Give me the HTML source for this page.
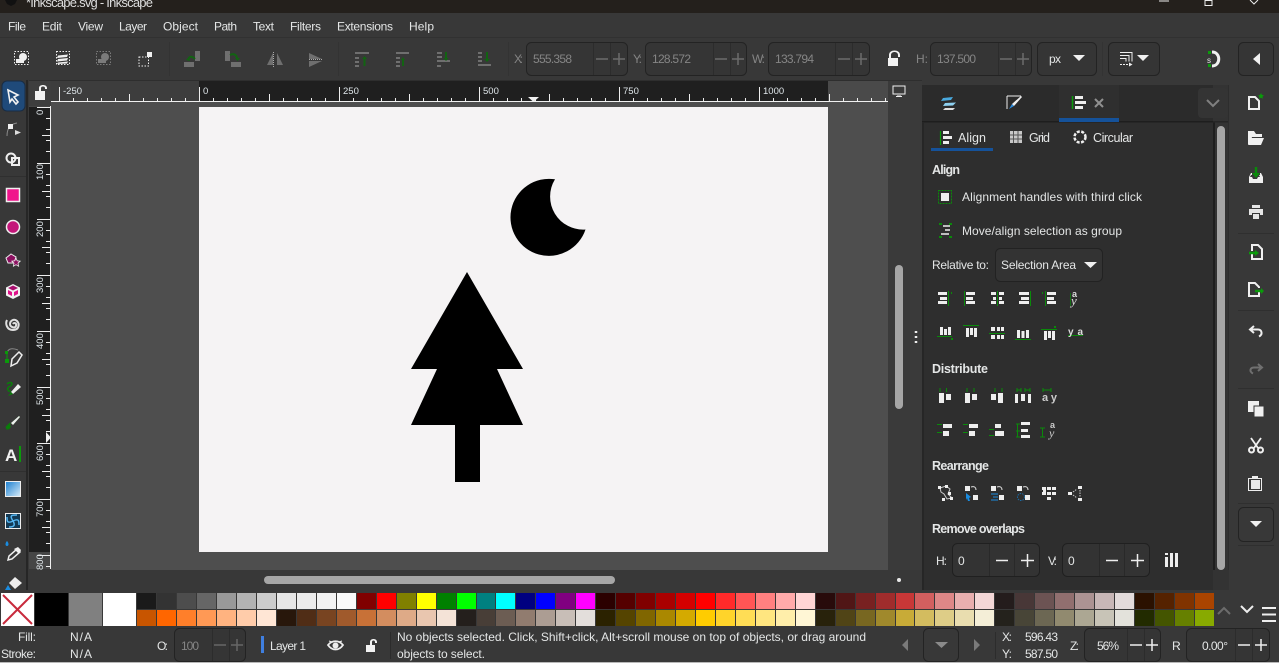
<!DOCTYPE html>
<html><head><meta charset="utf-8"><title>Inkscape</title>
<style>
html,body{margin:0;padding:0;width:1279px;height:663px;overflow:hidden;background:#383838}
svg{position:absolute;left:0;top:0;display:block}
text{font-family:"Liberation Sans",sans-serif;font-size:12px;fill:#e4e6e6}
.d{fill:#858585}.b{font-weight:bold;font-size:12.5px}.s{font-size:9.5px;fill:#dfe6ea}
.sw{position:absolute;display:flex;left:137.3px;width:1080px;height:17px}
.sw i{display:block;width:18.957px;height:16px;margin-right:1px;border:0;flex:none}
</style></head><body>
<svg width="1279" height="663" viewBox="0 0 1279 663" xmlns="http://www.w3.org/2000/svg">
<defs>
<pattern id="hr" x="59" y="81" width="140" height="21" patternUnits="userSpaceOnUse">
<path d="M.5 6V21M14.5 17V21M28.5 17V21M42.5 17V21M56.5 17V21M70.5 13V21M84.5 17V21M98.5 17V21M112.5 17V21M126.5 17V21" stroke="#eee" fill="none"/></pattern>
<pattern id="vr" x="29" y="107" width="22" height="56" patternUnits="userSpaceOnUse">
<path d="M8 .5H22M17 11.5H22M17 22.5H22M13 28.5H22M17 33.5H22M17 44.5H22" stroke="#eee" fill="none"/></pattern>
</defs>
<!-- backgrounds -->
<rect width="1279" height="663" fill="#383838"/>
<rect width="1279" height="13" fill="#24201c"/>
<rect y="37" width="1279" height="1" fill="#313131"/>
<rect y="80" width="922" height="1" fill="#2e2e2e"/>
<!-- title -->
<path d="M5 0h12l-2 4-4 2-4-2z" fill="#111"/>
<text x="26" y="7" textLength="127" style="font-size:13px;fill:#ddd">*Inkscape.svg - Inkscape</text>
<path d="M1159 1h10" stroke="#eee"/><path d="M1205 .5h7v5h-7zM1207 .5v-1" fill="none" stroke="#eee"/><path d="M1250 0l4 4 4-4" fill="none" stroke="#eee"/>
<!-- menu -->
<g style="font-size:12.5px">
<text x="8" y="30.500" textLength="18">File</text><text x="42" y="30.500" textLength="20">Edit</text><text x="78" y="30.500" textLength="25">View</text><text x="119" y="30.500" textLength="28">Layer</text><text x="163" y="30.500" textLength="35">Object</text><text x="214" y="30.500" textLength="23">Path</text><text x="253" y="30.500" textLength="21">Text</text><text x="290" y="30.500" textLength="31">Filters</text><text x="337" y="30.500" textLength="56">Extensions</text><text x="409" y="30.500" textLength="25">Help</text>
</g>
<!-- top toolbar separators -->
<path d="M169.500 42V76M338.500 42V76M508.500 42V76M1102.500 42V76" stroke="#333"/>
<!-- top toolbar icons -->
<g fill="none" stroke="#f0f0f0" stroke-dasharray="1.500 1.500"><rect x="14.500" y="51.500" width="14" height="13"/><rect x="56.500" y="51.500" width="13" height="13"/><rect x="139" y="57" width="9.500" height="9"/></g>
<g fill="#f0f0f0"><circle cx="23" cy="57" r="4"/><rect x="16" y="59" width="8" height="4"/><path d="M58 55.500l10-1-1 2.500-10 1zM58 59l10-1-1 2.500-10 1zM58 62.500l10-1-1 2-10 .5z"/><rect x="147" y="52" width="5" height="5"/></g>
<g opacity=".45"><rect x="96.500" y="51.500" width="14" height="13" fill="none" stroke="#ccc" stroke-dasharray="1.500 1.500"/><circle cx="105" cy="57" r="4" fill="#ccc"/><rect x="98" y="59" width="8" height="4" fill="#ccc"/></g>
<g fill="#6f6f6f"><rect x="184" y="62" width="10" height="5"/><rect x="195" y="51" width="5" height="10"/><rect x="225" y="51" width="5" height="10"/><rect x="231" y="62" width="10" height="5"/><path d="M267 65l6-12v12zM283 65l-6-12v12zM309 53l13 6h-13zM309 67l13-6h-13z"/>
<path d="M355 52h14v2h-14zM355 57h4v2h-4zM355 61h4v2h-4zM355 65h4v2h-4zM396 52h13v2h-13zM396 57h4v2h-4zM396 61h4v2h-4zM396 65h4v2h-4zM437 52h5v2h-5zM437 56h5v2h-5zM437 60h13v2h-13zM437 65h4v2h-4zM478 52h4v2h-4zM478 56h4v2h-4zM478 60h4v2h-4zM478 64h13v2h-13z"/></g>
<g fill="none" stroke="#126312" stroke-width="2"><path d="M195 59c-4-4-6-2-7 1M230 55c4-2 7 0 7 4M364.500 66V58M403 66V59M446 52v8M487 52v9"/></g>
<path d="M186 60l3-3 1 4zM235 58h5l-2.500 3zM362 59l2.500-3 2.500 3zM401 60l2-3 2 3zM443.500 58h5l-2.500 3zM484 59h6l-3 3z" fill="#126312"/>
<path d="M273.500 52v15M309 59.500h14" stroke="#aaa" stroke-dasharray="1 1"/>
<!-- field boxes -->
<g fill="#353535" stroke="#232323"><rect x="526.500" y="42.500" width="101" height="33" rx="5"/><rect x="645.500" y="42.500" width="101" height="33" rx="5"/><rect x="768.500" y="42.500" width="101" height="33" rx="5"/><rect x="930.500" y="42.500" width="101" height="33" rx="5"/><rect x="1037.500" y="42.500" width="59" height="33" rx="5"/><rect x="1108.500" y="42.500" width="51" height="33" rx="5"/><rect x="1238.500" y="42.500" width="35" height="33" rx="5"/></g>
<path d="M593.500 43V75M610.500 43V75M713.500 43V75M730.500 43V75M835.500 43V75M852.500 43V75M998.500 43V75M1015.500 43V75" stroke="#2c2c2c"/>
<path d="M596 59h12M613 59h12M715 59h12M732 59h12M838 59h12M855 59h12M1000 59h12M1017 59h12M619 53v12M738 53v12M861 53v12M1023 53v12" stroke="#6c6c6c" stroke-width="1.500"/>
<g style="font-size:12px"><text class="d" x="514" y="63" textLength="9">X:</text><text class="d" x="533" y="63" textLength="39">555.358</text><text class="d" x="633" y="63" textLength="9">Y:</text><text class="d" x="652" y="63" textLength="39">128.572</text><text class="d" x="752" y="63" textLength="13">W:</text><text class="d" x="775" y="63" textLength="39">133.794</text><text class="d" x="916" y="63" textLength="12">H:</text><text class="d" x="937" y="63" textLength="39">137.500</text><text x="1049" y="63" textLength="12">px</text></g>
<path d="M888 58h10v8h-10zM891 58v-3c0-4 7-4 7 0v2h2v-2c0-6-11-6-11 0v3z" fill="#f2f2f2"/>
<path d="M1073 55h12l-6 6zM1137 55h12l-6 6zM1253 59l7-6v12z" fill="#f0f0f0"/>
<path d="M1120 52.500h12v9M1120 55.500h9v6M1120 58.500h6v3" stroke="#f0f0f0" fill="none"/><path d="M1120 64.500h9" stroke="#f0f0f0" fill="none" stroke-dasharray="2 1"/><path d="M1129 62.500l3.500 2-3.500 2z" fill="#f0f0f0"/>
<path d="M1212 52c9 0 9 14 0 14" fill="none" stroke="#f0f0f0" stroke-width="3"/><rect x="1208" y="51" width="3" height="3" fill="#0b9b0b"/><rect x="1208" y="64" width="3" height="3" fill="#0b9b0b"/><text x="1207" y="63" style="font-size:8px">s</text>
<!-- rulers -->
<rect x="29" y="81" width="893" height="23" fill="#3e3e3e"/>
<rect x="199" y="81" width="629" height="20" fill="#1f1f1f"/>
<rect x="51" y="81" width="148" height="20" fill="#3d3d3d"/>
<rect x="828" y="81" width="60" height="20" fill="#4a4a4a"/>
<rect x="0" y="80" width="29" height="510" fill="#383838"/>
<rect x="26" y="80" width="2" height="510" fill="#262626"/>
<rect x="29" y="103" width="22" height="466" fill="#464646"/>
<rect x="29" y="107" width="21" height="445" fill="#1f1f1f"/>
<rect x="51" y="102" width="837" height="468" fill="#4e4e4e"/>
<rect x="199" y="107" width="629" height="445" fill="#f5f3f4"/>
<rect x="51" y="81" width="837" height="21" fill="url(#hr)"/>
<rect x="51" y="101" width="837" height="1" fill="#f0f0f0"/>
<rect x="29" y="107" width="22" height="461" fill="url(#vr)"/>
<rect x="50" y="102" width="1" height="467" fill="#f0f0f0"/>
<rect x="29" y="81" width="22" height="25" fill="#3e3e3e"/>
<path d="M35 91h10v9h-10zM39 91v-3c0-4 8-4 8 0v1h-2v-1c0-2-4-2-4 0v3z" fill="#f2f2f2"/>
<path d="M528 97h11l-5.500 5z" fill="#f0f0f0"/><path d="M46 432v11l5-5.500z" fill="#f0f0f0"/>
<g class="rl"><text class="s" x="63" y="94">-250</text><text class="s" x="203" y="94">0</text><text class="s" x="343" y="94">250</text><text class="s" x="483" y="94">500</text><text class="s" x="623" y="94">750</text><text class="s" x="763" y="94">1000</text>
<text class="s" transform="translate(43 115) rotate(-90)">0</text><text class="s" transform="translate(43 180) rotate(-90)">100</text><text class="s" transform="translate(43 237) rotate(-90)">200</text><text class="s" transform="translate(43 293) rotate(-90)">300</text><text class="s" transform="translate(43 349) rotate(-90)">400</text><text class="s" transform="translate(43 405) rotate(-90)">500</text><text class="s" transform="translate(43 461) rotate(-90)">600</text><text class="s" transform="translate(43 517) rotate(-90)">700</text><text class="s" transform="translate(43 570) rotate(-90)">800</text></g>
<!-- drawing -->
<path d="M467 272L523 369H497L523 425H480V482H455V425H411L437 369H411Z" fill="#000"/>
<path d="M555 179.300A38.500 38.500 0 1 0 585.500 229.500A33 33 0 0 1 555 179.300Z" fill="#000"/>
<!-- left toolbar -->
<rect x="2" y="81" width="23" height="30" rx="5" fill="#1f4a7a" stroke="#182c44"/>
<path d="M8 90l10 5-4 2 4 5-2 2-4-5-2 3z" fill="#1f4a7a" stroke="#f2f2f2" stroke-width="1.600"/>
<path d="M7 136c0-7 3-12 10-13" fill="none" stroke="#888"/><rect x="8" y="124" width="5" height="5" fill="#f0f0f0"/><path d="M15 130l6 2.500-6 2.500z" fill="#ddd"/>
<circle cx="11" cy="158" r="4.500" fill="none" stroke="#eee" stroke-width="2"/><rect x="12" y="158" width="7" height="7" fill="none" stroke="#eee" stroke-width="2"/>
<rect x="6.500" y="188.500" width="13" height="13" fill="#f0148c" stroke="#f0f0f0" stroke-width="1.500"/>
<circle cx="13" cy="227" r="6.500" fill="#c4177a" stroke="#f0f0f0" stroke-width="1.500"/>
<path d="M6 258l5-4 5 3-2 6h-6z" fill="#8c1060" stroke="#eee"/><path d="M16 258l1.200 2.800 3 .4-2.200 2 .6 3-2.600-1.500-2.600 1.500 .6-3-2.200-2 3-.4z" fill="#8c1060" stroke="#eee" stroke-width=".8"/>
<path d="M13 284l7 3.500v8L13 299l-7-3.500v-8z" fill="#f2f2f2"/><path d="M8 288l5-2.500 5 2.500-5 2.500z" fill="#aa1070"/><path d="M8 290l4 2v4l-4-2zM18 290l-4 2v4l4-2z" fill="#e0128a"/>
<path d="M13 324c1-2 4-1 3 2s-6 1-6-2 4-6 7-3 2 9-4 9-8-6-6-10" fill="none" stroke="#e0e0e0" stroke-width="2"/>
<path d="M7 353c1-5 6-5 11-3" fill="none" stroke="#888"/><rect x="5" y="351" width="3" height="3" fill="#0a9a0a"/><rect x="5" y="359" width="4" height="4" fill="#0a9a0a"/><path d="M7 353v6" stroke="#0a9a0a"/><path d="M11 366l1-7 7-7 3 3-5 8z" fill="none" stroke="#eee" stroke-width="1.500"/>
<path d="M7 384c2-2 5-2 5 0s-6 3-4 6c1 2 3 1 3 1" fill="none" stroke="#0a7d0a" stroke-width="1.500"/><path d="M11 392l7-8 3 3-8 7z" fill="#eee"/><path d="M8 396l3-4 2 2z" fill="#0a7d0a"/>
<path d="M6 428c1-3 3-2 4-5" fill="none" stroke="#0a7d0a" stroke-width="1.500"/><path d="M6 429c1 1 4 1 5-3l-3-2zM11 423l8-7 1 1-7 8z" fill="#0a7d0a"/><path d="M11 423l8-7 1 1-7 8z" fill="#eee"/>
<text x="5" y="461" textLength="13" style="font-size:17px;font-weight:bold;fill:#f2f2f2">A</text><rect x="19" y="446" width="2" height="16" fill="#0a9a0a"/>
<defs><linearGradient id="g1" x1="0" y1="0" x2="1" y2="1"><stop offset="0" stop-color="#1a7fd0"/><stop offset="1" stop-color="#d8ecf8"/></linearGradient></defs>
<rect x="5.500" y="481.500" width="15" height="15" fill="url(#g1)" stroke="#eee"/>
<rect x="5.500" y="513.500" width="15" height="15" fill="#123a55" stroke="#eee"/><path d="M13 521c-4-6-1-6 4-6M13 521c6-3 6 0 6 4M13 521c3 5 0 6-4 6M13 521c-6 3-6 0-6-4" fill="none" stroke="#54b4f0" stroke-width="1.500"/>
<path d="M7 541c-2 2-2 5 0 5s2-3 0-5z" fill="#1a8ce0"/><path d="M8 560l1-4 8-7 3 3-8 7z" fill="none" stroke="#eee" stroke-width="1.500"/><path d="M14 549l4-2 3 3-2 4z" fill="#eee"/>
<path d="M15 577l7 6-7 6-6-6z" fill="#eee"/><path d="M8 585l3 5H5z" fill="#1a8ce0"/>
<path d="M0 176.500h26M0 471.500h26" stroke="#2f2f2f"/>
<!-- middle bars -->
<rect x="888" y="81" width="34" height="509" fill="#3a3a3a"/>
<rect x="51" y="570" width="871" height="20" fill="#383838"/>
<rect x="264" y="576" width="351" height="8" rx="4" fill="#a6a6a6"/>
<rect x="895" y="265" width="8" height="144" rx="4" fill="#a6a6a6"/>
<circle cx="899" cy="580" r="2" fill="#e8e8e8"/>
<path d="M893 86h12v8h-12zM897 96h4M896 96.500h6" fill="none" stroke="#f0f0f0"/>
<path d="M916 331v2M916 336v2M916 341v2" stroke="#eee" stroke-width="2.500"/>
<!-- panel -->
<rect x="922" y="85" width="307" height="505" fill="#2e2e2e"/>
<rect x="922" y="85" width="291" height="37" fill="#2b2b2b"/>
<rect x="1059" y="85" width="60" height="33" fill="#2f2f2f"/>
<rect x="922" y="121" width="291" height="1.500" fill="#1e1e1e"/>
<rect x="1059" y="118" width="60" height="4" fill="#15529a"/>
<rect x="1213" y="85" width="16" height="505" fill="#333"/><rect x="1213" y="122" width="2" height="448" fill="#1e1e1e"/>
<rect x="1198" y="88" width="30" height="30" rx="4" fill="#343434"/>
<path d="M1207 100l6 6 6-6" fill="none" stroke="#808080" stroke-width="2"/>
<rect x="1213" y="121" width="16" height="1.500" fill="#262626"/>
<rect x="1217" y="126" width="8" height="444" rx="4" fill="#a6a6a6"/>
<rect x="1228" y="85" width="1" height="485" fill="#2d2d2d"/>
<rect x="922" y="122" width="2" height="468" fill="#262626"/>
<rect x="931" y="148" width="62" height="3" fill="#15529a"/>
<path d="M943 98l10-1-2 3-10 1z" fill="#49a9de"/><path d="M945 103l11-.5-3 3-10 .5z" fill="#8ed0f0"/><path d="M945 108h10l-2 2h-10z" fill="#ddd"/>
<path d="M1007 96h14M1007 96v13" stroke="#eee" fill="none"/><path d="M1009 109l3-5 2 2z" fill="#2a8ce0"/><path d="M1012 104l9-8 1 1-8 9z" fill="#eee"/>
<path d="M1072.500 96v13" stroke="#0a9a0a" stroke-width="1.500"/><path d="M1075 96h8v3h-8zM1075 101h11v3h-11zM1075 106h8v3h-8z" fill="#eee"/>
<path d="M1095 99l8 8M1103 99l-8 8" stroke="#909090" stroke-width="2"/>
<path d="M940.500 131v14" stroke="#0a9a0a" stroke-width="1.200"/><path d="M943 131h6v3h-6zM943 136h9v3h-9zM943 141h6v3h-6z" fill="#eee"/>
<text x="958" y="142" textLength="28" style="font-size:12.500px">Align</text>
<path d="M1010 131h12v12h-12z" fill="#c8c8c8"/><path d="M1013.500 131v12M1018 131v12M1010 135h12M1010 139h12" stroke="#555"/>
<text x="1029" y="142" textLength="21" style="font-size:12.500px">Grid</text>
<circle cx="1080" cy="137" r="5.500" fill="none" stroke="#eee" stroke-width="2.500" stroke-dasharray="3 1.500"/>
<text x="1093" y="142" textLength="40" style="font-size:12.500px">Circular</text>
<text class="b" x="932" y="174" textLength="28">Align</text>
<rect x="938.500" y="190.500" width="13" height="13" fill="none" stroke="#0a8a0a" stroke-dasharray="2 1"/><rect x="941" y="193" width="8" height="8" fill="#eee"/>
<text x="962" y="201" textLength="180">Alignment handles with third click</text>
<path d="M939 224h3M949 224h3M939 237h3M949 237h3" stroke="#0a8a0a" stroke-width="2"/><path d="M943 226h7M945 230h5M941 234h8" stroke="#eee" stroke-width="1.500"/>
<text x="962" y="235" textLength="160">Move/align selection as group</text>
<text x="932" y="269" textLength="57">Relative to:</text>
<rect x="995.500" y="248.500" width="107" height="33" rx="5" fill="#333" stroke="#222"/>
<text x="1001" y="269" textLength="75">Selection Area</text>
<path d="M1084 262h13l-6.500 6z" fill="#f0f0f0"/>
<!-- align row1 -->
<g fill="#eee"><path d="M938 292h9v3h-9zM940 297h7v3h-7zM938 301h9v3h-9zM966 292h9v3h-9zM966 297h7v3h-7zM966 301h9v3h-9zM991 292h5v3h-5zM999 292h5v3h-5zM993 297h3v3h-3zM999 297h3v3h-3zM991 301h5v3h-5zM999 301h5v3h-5zM1019 292h10v3h-10zM1021 297h8v3h-8zM1019 301h10v3h-10zM1047 292h9v3h-9zM1047 297h7v3h-7zM1047 301h9v3h-9z"/></g>
<path d="M948.500 291v15M964.500 291v15M997.500 291v15M1030.500 291v15M1045.500 291v15" stroke="#0a8a0a"/><path d="M951 292h1v2h-1zM1042 292h1v2h-1z" fill="#0a8a0a"/>
<text x="1072" y="297" style="font-size:9px;font-weight:bold;fill:#ddd">a</text><text x="1071" y="305" style="font-size:13px;font-family:'Liberation Serif',serif;font-style:italic;fill:#ddd">y</text><path d="M1070.500 293v13" stroke="#0a8a0a" opacity=".7"/>
<!-- align row2 -->
<g fill="#eee"><path d="M940 327h3v8h-3zM944 329h3v6h-3zM948 327h3v8h-3zM966 328h3v9h-3zM970 328h3v7h-3zM974 328h3v9h-3zM991 327h4v4h-4zM997 327h3v4h-3zM1001 327h3v4h-3zM991 335h4v4h-4zM997 335h3v4h-3zM1001 335h3v4h-3zM1017 330h3v8h-3zM1021.500 331h3v7h-3zM1026 330h3v8h-3zM1044 331h3v9h-3zM1048 331h3v7h-3zM1052 331h3v9h-3z"/></g>
<path d="M937 336.500h15M963 325.500h16M989 333.500h16M1015 339.500h16M1041 329.500h16M1068 335.500h15" stroke="#0a8a0a"/><path d="M951 338h2v2h-2zM1054 326h2v2h-2z" fill="#0a8a0a"/>
<text x="1068" y="335" textLength="15" style="font-size:10px;fill:#ddd;font-weight:bold">ya</text>
<text class="b" x="932" y="373" textLength="56">Distribute</text>
<!-- dist row1 -->
<g fill="#eee"><path d="M939 393h5v10h-5zM946 394h5v6h-5zM965 393h5v10h-5zM972 394h5v6h-5zM991 394h5v6h-5zM998 393h5v10h-5zM1015 394h3v9h-3zM1021 394h4v7h-4zM1028 394h3v9h-3z"/></g>
<path d="M940 388v4M946.500 388v4M967 388v4M974 388v4M995 388v4M1002 388v4M1017 390h4M1025 390h5M1017 388v4M1021 388v4M1025 388v4M1030 388v4M1043 390h8M1043 388v4M1051 388v4" stroke="#0a8a0a"/>
<text x="1042" y="401" textLength="15" style="font-size:11px;font-weight:bold;fill:#ccc">ay</text>
<!-- dist row2 -->
<g fill="#eee"><path d="M943 424h9v4h-9zM943 431h6v5h-6zM969 424h9v4h-9zM969 431h6v5h-6zM995 424h6v4h-6zM995 431h9v5h-9zM1021 422h9v3h-9zM1021 429h7v3h-7zM1021 435h9v3h-9z"/></g>
<path d="M937 424.500h5M937 432.500h5M963 424.500h5M963 432.500h5M989 429.500h5M989 435.500h5M1016 424h4M1016 431h4M1016 437h4M1017.500 424v13M1040 428h5M1040 437h5M1042.500 428v9" stroke="#0a8a0a"/>
<text x="1050" y="428" style="font-size:9px;font-weight:bold;fill:#ccc">a</text><text x="1049" y="437" style="font-size:12px;font-family:'Liberation Serif',serif;font-style:italic;fill:#ccc">y</text>
<text class="b" x="932" y="470" textLength="57">Rearrange</text>
<!-- rearrange -->
<path d="M940 488l6-2 4 3-2 5 4 4-5 1-3-5-3-2z" fill="none" stroke="#ccc"/><g fill="#eee"><rect x="938" y="486" width="3" height="3"/><rect x="945" y="485" width="3" height="3"/><rect x="948" y="492" width="3" height="3"/><rect x="950" y="497" width="3" height="3"/><rect x="942" y="498" width="3" height="3"/></g>
<g fill="#eee"><rect x="965" y="486" width="5" height="5"/><rect x="973" y="495" width="5" height="5"/><rect x="991" y="486" width="5" height="5"/><rect x="999" y="495" width="5" height="5"/><rect x="1017" y="486" width="5" height="5"/><rect x="1025" y="495" width="5" height="5"/></g>
<path d="M971 487c3-1 5 0 5 3M997 487c3-1 5 0 5 3M1023 487c3-1 5 0 5 3" fill="none" stroke="#ddd"/>
<path d="M966 493l5 4-2 1 1 3-2 0-1-3-1 2z" fill="#1a8ce0"/><path d="M991 494h7M993 497h5M991 500h7" stroke="#1a8ce0"/><circle cx="1021" cy="497" r="3.500" fill="none" stroke="#1a6ca8" stroke-dasharray="1.500 1"/>
<g fill="#eee"><path d="M1042 487h4v3h-4zM1047 487h4v3h-4zM1052 487h4v3h-4zM1042 492h4v3h-4zM1047 492h4v3h-4zM1052 492h4v3h-4zM1047 497h4v3h-4zM1043 490h3v2h-3z"/><path d="M1068 492h4v3h-4zM1078 486h4v3h-4zM1078 498h4v3h-4z"/></g>
<path d="M1073 492l4-3M1073 495l4 3M1080 490v7" stroke="#ccc" stroke-dasharray="1.500 1" fill="none"/>
<text class="b" x="932" y="533" textLength="93">Remove overlaps</text>
<text x="936" y="565" textLength="11">H:</text><text x="1048" y="565" textLength="9">V:</text>
<g fill="#333" stroke="#202020"><rect x="952.500" y="543.500" width="87" height="33" rx="5"/><rect x="1062.500" y="543.500" width="87" height="33" rx="5"/></g>
<path d="M989.500 544v32M1014.500 544v32M1099.500 544v32M1124.500 544v32" stroke="#292929"/>
<text x="958" y="565" textLength="7">0</text><text x="1068" y="565" textLength="7">0</text>
<path d="M996 560.500h12M1021 560.500h13M1027.500 554v13M1106 560.500h12M1131 560.500h13M1137.500 554v13" stroke="#eee" stroke-width="1.500"/>
<path d="M1165 557h3v10h-3zM1165 553h3v2h-3zM1170 553h3v14h-3zM1175 553h3v14h-3z" fill="#eee"/>
<!-- right toolbar -->
<path d="M1238 233.500h36M1238 310.500h36M1238 388.500h36M1238 503.500h36M1238 545.500h36" stroke="#2f2f2f"/>
<path d="M1249 97h6l4 4v8h-10z" fill="none" stroke="#f0f0f0" stroke-width="2"/><path d="M1261 93l1 2 2 .3-1.500 1.500 .4 2-1.900-1-1.900 1 .4-2-1.500-1.500 2-.3z" fill="#0a9a0a"/>
<path d="M1248 131h6l2 3h6v3h-10l-2 7h-2zM1251 138h13l-3 7h-13z" fill="#f0f0f0"/>
<path d="M1256 167v9" stroke="#0a8a0a" stroke-width="2.500"/><path d="M1252 173h8l-4 5z" fill="#0a8a0a"/><path d="M1252 173h-1l-2 4v6h14v-6l-2-4h-1v2h-1l1 2h-2l-1 2h-4l-1-2h-2l1-2h1z" fill="#f0f0f0"/>
<path d="M1252 205h8v3h-8zM1249 209h14v6h-3v-2h-8v2h-3zM1253 214h6v5h-6z" fill="#e6e6e6"/>
<path d="M1252 251v-6h6l4 4v10h-10v-5" fill="none" stroke="#f0f0f0" stroke-width="2"/><path d="M1249 253h8" stroke="#0a9a0a" stroke-width="2.500"/><path d="M1255 250l4 3-4 3z" fill="#0a9a0a"/>
<path d="M1259 291v5h-10v-13h6l4 4v1" fill="none" stroke="#f0f0f0" stroke-width="2"/><path d="M1255 291h8" stroke="#0a9a0a" stroke-width="2.500"/><path d="M1261 288l3 3-3 3z" fill="#0a9a0a"/>
<path d="M1254 326l-4 3.500 4 3.500M1250 329.500h8c4 0 5 5 1 7" fill="none" stroke="#eee" stroke-width="2"/>
<path d="M1258 364l4 3.500-4 3.500M1262 367.500h-8c-4 0-5 4-1 6" fill="none" stroke="#707070" stroke-width="2"/>
<path d="M1248 401h11v5h-5v6h-6z" fill="#f0f0f0"/><rect x="1254" y="406" width="10" height="11" fill="#f0f0f0" stroke="#383838" stroke-width="1"/>
<circle cx="1251.500" cy="450" r="2.500" fill="none" stroke="#f0f0f0" stroke-width="2"/><circle cx="1260.500" cy="450" r="2.500" fill="none" stroke="#f0f0f0" stroke-width="2"/><path d="M1251 438l7 10M1261 438l-7 10" stroke="#f0f0f0" stroke-width="1.800"/>
<path d="M1248.500 478.500h13v12h-13z" fill="none" stroke="#eee"/><path d="M1252 476h6v3h-6z" fill="#eee"/><path d="M1251 480h9v9h-9z" fill="#e8e8e8"/>
<rect x="1238.500" y="507.500" width="35" height="34" rx="5" fill="#383838" stroke="#232323"/><path d="M1250 521h12l-6 6z" fill="#f0f0f0"/>
<!-- palette bg -->
<rect y="590" width="1279" height="37" fill="#383838"/>
<rect x="1" y="593" width="33" height="33" fill="#fff"/><path d="M3 595l29 29M32 595l-29 29" stroke="#c82a3c" stroke-width="2"/>
<rect x="35" y="593" width="33" height="33" fill="#000"/><rect x="69" y="593" width="33" height="33" fill="#808080"/><rect x="103" y="593" width="33" height="33" fill="#fff"/>
<path d="M1218 614l6-6 6 6" fill="none" stroke="#6c6c6c" stroke-width="2"/><path d="M1241 606l6 6 6-6" fill="none" stroke="#eee" stroke-width="2"/>
<path d="M1262 608h14M1262 614.500h14M1262 621h14" stroke="#eee" stroke-width="2"/>
<!-- status -->
<text x="18" y="641" textLength="18">Fill:</text><text x="1" y="658" textLength="35">Stroke:</text><text x="70" y="641" textLength="22">N/A</text><text x="70" y="658" textLength="22">N/A</text>
<text x="157" y="650" textLength="11">O:</text>
<rect x="174.500" y="628.500" width="71" height="33" rx="5" fill="#353535" stroke="#232323"/><text class="d" x="181" y="650" textLength="18">100</text>
<path d="M212.500 629v32M229.500 629v32" stroke="#2c2c2c"/><path d="M214 645h12M231 645h12M237 639v12" stroke="#666" stroke-width="1.500"/>
<rect x="261" y="636" width="3" height="17" fill="#3f7fe0"/><text x="270" y="650" textLength="36">Layer 1</text>
<path d="M328 645c4-5 11-5 15 0-4 6-11 6-15 0z" fill="none" stroke="#eee" stroke-width="1.800"/><circle cx="335.500" cy="645.500" r="3" fill="#eee"/><path d="M329 641l3 1M342 641l-3 1" stroke="#eee"/>
<path d="M366 645h9v7h-9zM370 645v-3c0-4 7-4 7 0v1h-2v-1c0-2-3-2-3 0v3z" fill="#f2f2f2"/>
<path d="M390.500 632v27M995.500 632v27" stroke="#2c2c2c"/>
<text x="397" y="641" textLength="469">No objects selected. Click, Shift+click, Alt+scroll mouse on top of objects, or drag around</text>
<text x="397" y="658" textLength="88">objects to select.</text>
<path d="M908 639v12l-6-6zM974 639v12l6-6z" fill="#7a7a7a"/>
<rect x="923.500" y="628.500" width="35" height="33" rx="5" fill="#383838" stroke="#232323"/><path d="M935 642h13l-6.500 6z" fill="#8a8a8a"/>
<text x="1002" y="641" textLength="10">X:</text><text x="1002" y="658" textLength="10">Y:</text><text x="1025" y="641" textLength="33">596.43</text><text x="1025" y="658" textLength="33">587.50</text>
<text x="1070" y="650" textLength="9">Z:</text><text x="1172" y="650" textLength="9">R:</text>
<g fill="#353535" stroke="#232323"><rect x="1084.500" y="628.500" width="76" height="33" rx="5"/><rect x="1186.500" y="628.500" width="83" height="33" rx="5"/></g>
<path d="M1127.500 629v32M1144.500 629v32M1235.500 629v32M1252.500 629v32" stroke="#2c2c2c"/>
<text x="1097" y="650" textLength="22">56%</text><text x="1202" y="650" textLength="26">0.00°</text>
<path d="M1130 645h12M1146 645h12M1152 639v12M1238 645h12M1255 645h12M1261 639v12" stroke="#eee" stroke-width="1.500"/>
<rect y="662" width="1279" height="1" fill="#b8b8b8"/>
</svg>
<div class="sw" style="top:593px"><i style="background:#1a1a1a"></i><i style="background:#333"></i><i style="background:#4d4d4d"></i><i style="background:#666"></i><i style="background:#999"></i><i style="background:#b3b3b3"></i><i style="background:#ccc"></i><i style="background:#e6e6e6"></i><i style="background:#ececec"></i><i style="background:#f2f2f2"></i><i style="background:#f9f9f9"></i><i style="background:#800000"></i><i style="background:#f00"></i><i style="background:#808000"></i><i style="background:#ff0"></i><i style="background:#008000"></i><i style="background:#0f0"></i><i style="background:#008080"></i><i style="background:#0ff"></i><i style="background:#000080"></i><i style="background:#00f"></i><i style="background:#800080"></i><i style="background:#f0f"></i><i style="background:#2b0000"></i><i style="background:#500"></i><i style="background:#800000"></i><i style="background:#a00"></i><i style="background:#d40000"></i><i style="background:#f00"></i><i style="background:#ff2a2a"></i><i style="background:#f55"></i><i style="background:#ff8080"></i><i style="background:#faa"></i><i style="background:#ffd5d5"></i><i style="background:#280b0b"></i><i style="background:#501616"></i><i style="background:#782121"></i><i style="background:#a02c2c"></i><i style="background:#c83737"></i><i style="background:#d35f5f"></i><i style="background:#de8787"></i><i style="background:#e9afaf"></i><i style="background:#f4d7d7"></i><i style="background:#241c1c"></i><i style="background:#483737"></i><i style="background:#6c5353"></i><i style="background:#916f6f"></i><i style="background:#ac9393"></i><i style="background:#c8b7b7"></i><i style="background:#e3dbdb"></i><i style="background:#2b1100"></i><i style="background:#520"></i><i style="background:#803300"></i><i style="background:#a40"></i></div>
<div class="sw" style="top:610px"><i style="background:#c85500"></i><i style="background:#f60"></i><i style="background:#ff7f2a"></i><i style="background:#f95"></i><i style="background:#ffb380"></i><i style="background:#fca"></i><i style="background:#ffe6d5"></i><i style="background:#28170b"></i><i style="background:#502d16"></i><i style="background:#784421"></i><i style="background:#a05a2c"></i><i style="background:#c87137"></i><i style="background:#d38d5f"></i><i style="background:#deaa87"></i><i style="background:#e9c6af"></i><i style="background:#f4e3d7"></i><i style="background:#241f1c"></i><i style="background:#483e37"></i><i style="background:#6c5d53"></i><i style="background:#917c6f"></i><i style="background:#ac9d93"></i><i style="background:#c8beb7"></i><i style="background:#e3dedb"></i><i style="background:#2b2200"></i><i style="background:#540"></i><i style="background:#806600"></i><i style="background:#a80"></i><i style="background:#d4aa00"></i><i style="background:#fc0"></i><i style="background:#ffd42a"></i><i style="background:#fd5"></i><i style="background:#ffe680"></i><i style="background:#fea"></i><i style="background:#fff6d5"></i><i style="background:#28220b"></i><i style="background:#504416"></i><i style="background:#786721"></i><i style="background:#a0892c"></i><i style="background:#c8ab37"></i><i style="background:#d3bc5f"></i><i style="background:#decd87"></i><i style="background:#e9ddaf"></i><i style="background:#f4eed7"></i><i style="background:#24221c"></i><i style="background:#484537"></i><i style="background:#6c6753"></i><i style="background:#918a6f"></i><i style="background:#aca793"></i><i style="background:#c8c4b7"></i><i style="background:#e3e2db"></i><i style="background:#222b00"></i><i style="background:#450"></i><i style="background:#668000"></i><i style="background:#8a0"></i></div>
</body></html>
